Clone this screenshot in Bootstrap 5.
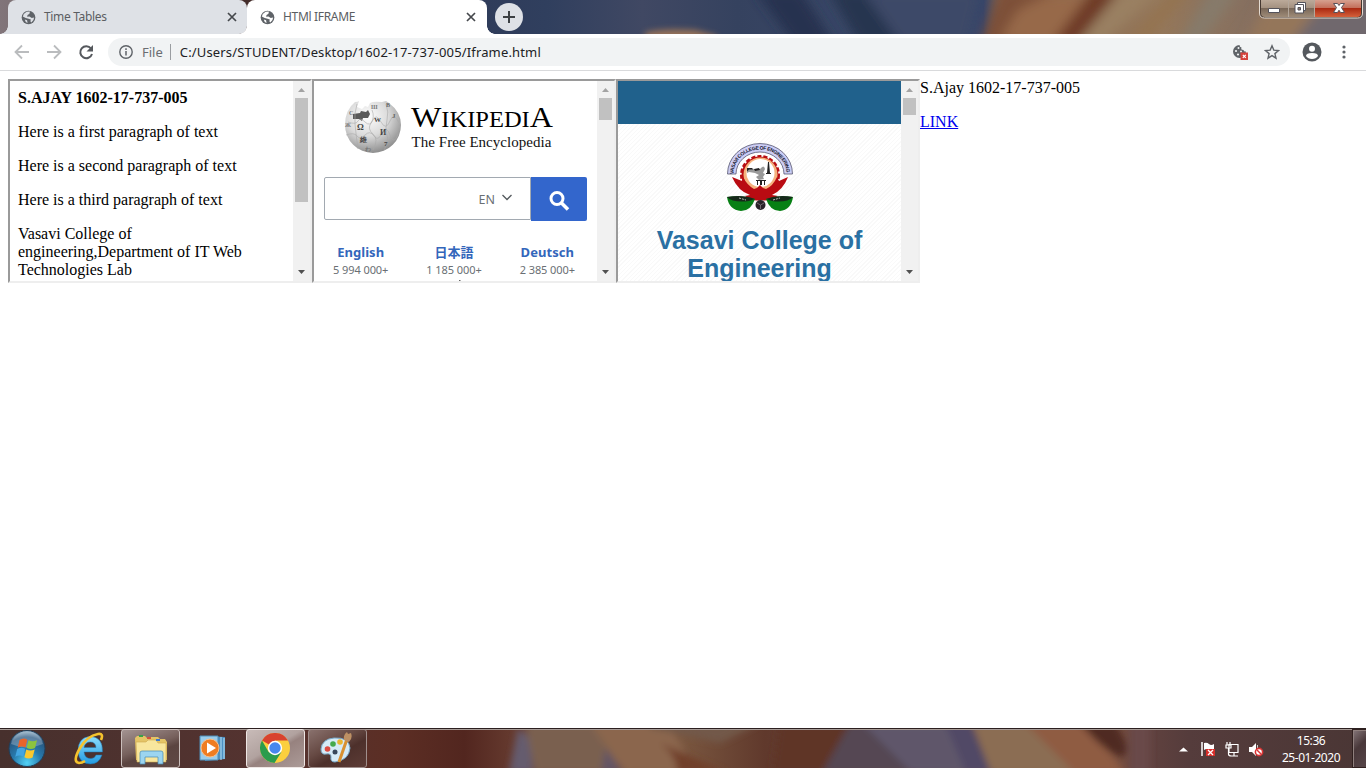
<!DOCTYPE html>
<html lang="en">
<head>
<meta charset="utf-8">
<title>HTML IFRAME</title>
<link href="https://cdn.jsdelivr.net/npm/bootstrap@5.3.0/dist/css/bootstrap.min.css" rel="stylesheet">
<style>
html,body{height:768px;overflow:hidden}
body{width:1366px;background:#fff;font-family:"Noto Sans","Noto Sans CJK JP",sans-serif;font-size:12px;line-height:16px;color:#000}
svg{display:block;flex:none}
.strip{height:34px;background:#36435f}
.wall{left:0;top:0;z-index:0}
.tab{height:34px;font-size:12px;color:#5b5e62;padding:0 10px 0 13px}
.tab svg.gl{margin-right:8px}
.tab-a{width:239px;margin-left:8px;background:#dee1e6;border-radius:8px 8px 8px 0;letter-spacing:-.33px}
.tab-b{width:240px;background:#fff;border-radius:8px 8px 0 0;letter-spacing:-.32px;padding-right:11px}
.tab-a::before,.tab-b::after{content:"";position:absolute;bottom:0;width:8px;height:8px}
.tab-a::before{left:-8px;background:radial-gradient(circle at 0 0,transparent 7.5px,#dee1e6 8px)}
.tab-b::before{content:"";position:absolute;bottom:0;left:-8px;width:8px;height:8px;background:radial-gradient(circle at 0 0,transparent 7.5px,#fff 8px)}
.tab-b::after{right:-8px;background:radial-gradient(circle at 100% 0,transparent 7.5px,#fff 8px)}
.plus{width:28px;height:28px;margin-left:8px;background:#dee1e6}
.caps{width:104px;height:19px;margin-right:3px}
.tools{height:37px;border-bottom:1px solid #d9dadc;padding:0 13px 0 13px}
.omni{height:28px;width:1182px;margin-left:13px;background:#f1f3f4;border-radius:14px;font-size:13px;color:#6a6d71;padding:0 10px 0 11px}
.omni .sep{width:1px;height:16px;background:#9a9da1;margin:0 9px 0 7px}
.url{color:#202124;letter-spacing:.155px}
.pg{height:657px;padding:8px}
.ser{font-family:"Liberation Serif",serif;font-size:16px;line-height:18px}
.ser p{margin:0 0 16px}
.fr{width:304px;height:204px;border:2px solid;border-color:#9a9a9a #eee #eee #9a9a9a;flex:none}
.fr .inner{width:283px;height:200px;overflow:hidden}
.sb{width:17px;height:200px;background:#f1f1f1}
.inp{width:207px;height:43px;border:1px solid #a2a9b1;border-radius:2px 0 0 2px;color:#6a6f74;padding-right:17px;font-size:12.500px}
.go{width:56px;height:44px;background:#36c;border-radius:0 2px 2px 0}
.langs{width:280px;padding-top:22px}
.langs b{display:block;color:#3366bb;font-size:13px;line-height:18px;letter-spacing:.05px}
.langs span{display:block;color:#6a6f74;font-size:11px;line-height:17px;letter-spacing:-.08px}
.vh{height:43px;background:#20618c}
.vb{height:157px;padding-top:19px;background:repeating-linear-gradient(135deg,#fff 0 2px,#f9f9f9 2px 3px)}
.vb h1{font:bold 25px/28px "Liberation Sans",sans-serif;color:#2a70a3;margin:14px 0 0}
.lk{color:#0000ee;text-decoration:underline}
.bar{height:40px;background:#4a302c}
.row-z{z-index:1}
.tb{width:59px;height:39px;margin-top:1px;border:1px solid #cbbfbc;border-radius:3px;background:linear-gradient(160deg,#a39391 0,#76605c 45%,#5b4440 60%,#5f4844 100%)}
.tb.dim{border-color:#a08f8c;background:linear-gradient(150deg,#89716d 0,#664943 40%,#4d302b 60%,#5d3c36)}
.tb.on{border-color:#eee6e4;background:linear-gradient(150deg,#c8bbb8 0,#b1a29f 45%,#97827f 55%,#ac9b98)}
.clock{color:#fff;font-size:12px;line-height:17px;width:72px;letter-spacing:-.45px}
.desk{width:14px;height:39px;border:1px solid #30201f;border-right:0;box-shadow:inset 1px 1px 0 #8f7f7d;background:linear-gradient(135deg,#86777a,#49383a 45%,#564548)}
</style>
</head>
<body class="d-flex flex-column">
<header class="strip d-flex position-relative overflow-hidden flex-shrink-0">
  <svg class="wall position-absolute" width="1366" height="34" viewBox="0 0 1366 34">
    <defs><filter id="b" x="-10%" y="-50%" width="120%" height="200%"><feGaussianBlur stdDeviation="6"/></filter><filter id="b2" x="-20%" y="-100%" width="140%" height="300%"><feGaussianBlur stdDeviation="3"/></filter>
    <linearGradient id="w"><stop offset="0" stop-color="#81757a"/><stop offset=".1" stop-color="#66544f"/><stop offset=".17" stop-color="#442a28"/><stop offset=".25" stop-color="#39342f"/><stop offset=".355" stop-color="#2f3c5a"/><stop offset=".4" stop-color="#303f5e"/><stop offset=".47" stop-color="#404863"/><stop offset=".54" stop-color="#35425f"/><stop offset=".66" stop-color="#3b4969"/><stop offset=".72" stop-color="#344469"/><stop offset=".735" stop-color="#86664f"/><stop offset=".85" stop-color="#94775a"/><stop offset="1" stop-color="#736567"/></linearGradient></defs>
    <rect width="1366" height="34" fill="url(#w)"/>
    <g filter="url(#b)">
      <path d="M755-10h45l35 55h-40z" fill="#27334f"/><path d="M828-10h34l40 55h-42z" fill="#283450"/><path d="M862-10h120l-14 55h-66z" fill="#3d4a67"/>
      <path d="M1000-10h52l-24 60h-50z" fill="#7d5038"/><path d="M1000 40l18-30 30-15h60l-34 50z" fill="#97694a"/>
      <path d="M1092-10h28l-45 55h-24z" fill="#6e3a28"/><path d="M1122-10h40l-60 55h-25z" fill="#9a8062"/><path d="M1176-10h15l-50 55h-16z" fill="#94734f"/><path d="M1210-10h30l-40 55h-22z" fill="#867a6a"/><path d="M1270-10h65l-40 55h-50z" fill="#94765a"/><path d="M1325 0h60v45h-95z" fill="#6f686d"/>
    </g>
    <path d="M645 33q12-5 50-3l22 6v6h-72z" fill="#9a7358" filter="url(#b2)"/>
  </svg>
  <div class="tab tab-a d-flex align-items-center position-relative"><svg class="gl" width="15" height="15" viewBox="0 0 16 16"><circle cx="8" cy="8" r="7.3" fill="#5f6368"/><path d="M6 1.8 9.5 1.6 9 4 7 5.200l-.5 2L9 7l2.500 1.500 2.500-.5q0 3-3 5.200L10 12l.5-2L8 9.200 5 8.500 2 7Q2.500 3.500 6 1.800M4 10l2.500 1 .5 2.800Q4.500 13 4 10" fill="#dee1e6"/></svg><span>Time Tables</span><svg class="ms-auto" width="10" height="10" viewBox="0 0 10 10"><path d="M1 1l8 8M9 1 1 9" stroke="#45484c" stroke-width="1.700"/></svg></div>
  <div class="tab tab-b d-flex align-items-center position-relative"><svg class="gl" width="15" height="15" viewBox="0 0 16 16"><circle cx="8" cy="8" r="7.3" fill="#5f6368"/><path d="M6 1.8 9.5 1.6 9 4 7 5.200l-.5 2L9 7l2.500 1.500 2.500-.5q0 3-3 5.200L10 12l.5-2L8 9.200 5 8.500 2 7Q2.500 3.500 6 1.800M4 10l2.500 1 .5 2.800Q4.500 13 4 10" fill="#fff"/></svg><span>HTMl IFRAME</span><svg class="ms-auto" width="10" height="10" viewBox="0 0 10 10"><path d="M1 1l8 8M9 1 1 9" stroke="#45484c" stroke-width="1.700"/></svg></div>
  <div class="plus rounded-circle d-flex align-items-center justify-content-center align-self-center row-z"><svg width="12" height="12" viewBox="0 0 12 12"><path d="M6 0v12M0 6h12" stroke="#3c4043" stroke-width="2"/></svg></div>
  <svg class="caps ms-auto row-z" viewBox="0 0 104 19">
    <defs><linearGradient id="cr" x2="0" y2="1"><stop stop-color="#d6a08f"/><stop offset=".45" stop-color="#c4705c"/><stop offset=".5" stop-color="#ab2a12"/><stop offset="1" stop-color="#d4613b"/></linearGradient><linearGradient id="cg" x2="0" y2="1"><stop stop-color="#bcaa9a"/><stop offset=".48" stop-color="#a3907f"/><stop offset=".5" stop-color="#7a6859"/><stop offset="1" stop-color="#9e8b77"/></linearGradient></defs>
    <path d="M.5-1v14q0 5 5 5h93q5 0 5-5V-1" fill="#453831" stroke="#e4dbd2"/><path d="M2 0h27v17H6q-4 0-4-4z" fill="url(#cg)"/><path d="M30 0h25v17H30z" fill="url(#cg)"/><path d="M56 0h46v13q0 4-4 4H56z" fill="url(#cr)"/>
    <path d="M29.500 0v17M55.500 0v17" stroke="#e4d7ca" stroke-width=".7"/>
    <path d="M9.500 8.500h11v4h-11z" fill="#fff" stroke="#54535b"/>
    <path d="M38.500 2.500h8v8h-8z" fill="#fff" stroke="#54535b"/><path d="M36 4.500h8.500V13H36z" fill="#fff" stroke="#54535b"/><path d="M39 7.500h2.500V10H39z" fill="#8b7b6e" stroke="#54535b"/>
    <path d="M74.500 3.500h4l1.500 2 1.500-2h4l-3 4 3 5h-4l-1.500-2.300-1.500 2.300h-4l3-5z" fill="#fff" stroke="#595058"/>
  </svg>
</header>
<nav class="tools d-flex align-items-center flex-shrink-0">
  <svg width="82" height="20" viewBox="0 0 82 20"><g fill="none" stroke="#babcbe" stroke-width="1.800"><path d="M16 10H3M9 3.500 2.500 10 9 16.500M34 10h13M41 3.500l6.500 6.500-6.500 6.500"/></g><path d="M78 6.500A6 6 0 1 0 79 12" fill="none" stroke="#55585d" stroke-width="2"/><path d="M80 3v6.500h-6.500z" fill="#55585d"/></svg>
  <div class="omni d-flex align-items-center">
    <svg width="14" height="14" viewBox="0 0 14 14"><circle cx="7" cy="7" r="6.200" fill="none" stroke="#5f6368" stroke-width="1.400"/><path d="M7 6v4.500M7 3.300v1.600" stroke="#5f6368" stroke-width="1.500"/></svg>
    <span style="margin-left:9px">File</span><i class="sep"></i><span class="url">C:/Users/STUDENT/Desktop/1602-17-737-005/Iframe.html</span>
    <svg class="ms-auto" width="17" height="17" viewBox="0 0 17 17" style="margin-right:15px"><path d="M7.500 1a6.500 6.500 0 1 0 6.500 6.500q-2 .5-2.500-1.500-3 0-2-2.500-2-.5-2-2.500" fill="#5f6368"/><g fill="#f1f3f4"><circle cx="4" cy="7" r="1.100"/><circle cx="6.500" cy="4" r="1"/><circle cx="6" cy="10.500" r="1.100"/><circle cx="9" cy="7.500" r="1"/></g><path d="M8.500 8.500H16V16H8.500z" fill="#d5433c"/><path d="M10.800 10.800l3 3m0-3-3 3" stroke="#fff" stroke-width="1.200"/></svg>
    <svg width="16" height="16" viewBox="0 0 16 16"><path d="M8 1.800l1.800 4.300 4.700.4-3.600 3.100 1.100 4.600L8 11.700l-4 2.500 1.100-4.600L1.500 6.500l4.700-.4z" fill="none" stroke="#5f6368" stroke-width="1.400"/></svg>
  </div>
  <svg width="20" height="20" viewBox="0 0 20 20" style="margin-left:12px"><circle cx="10" cy="10" r="9.500" fill="#55595e"/><circle cx="10" cy="6.800" r="3" fill="#fff"/><path d="M4 14q0-3 6-3t6 3q-2 3-6 3t-6-3" fill="#fff"/></svg>
  <svg width="4" height="16" viewBox="0 0 4 16" class="ms-auto" style="margin-right:7px" fill="#5f6368"><circle cx="2" cy="3" r="1.600"/><circle cx="2" cy="8" r="1.600"/><circle cx="2" cy="13" r="1.600"/></svg>
</nav>
<main class="pg d-flex flex-shrink-0">
  <section class="fr d-flex">
    <div class="inner ser p-2"><p><b>S.AJAY 1602-17-737-005</b></p><p>Here is a first paragraph of text</p><p>Here is a second paragraph of text</p><p>Here is a third paragraph of text</p><p class="mb-0">Vasavi College of engineering,Department of IT Web Technologies Lab</p></div>
    <svg class="sb" viewBox="0 0 17 200"><path d="M5 11l3.500-4 3.500 4z" fill="#a3a3a3"/><path d="M2 17h13v104H2z" fill="#c1c1c1"/><path d="M5 189h7l-3.500 4z" fill="#505050"/></svg>
  </section>
  <section class="fr d-flex">
    <div class="inner">
      <svg width="283" height="96" viewBox="314 81 283 96">
        <defs><radialGradient id="gg" cx=".4" cy=".3" r=".75"><stop stop-color="#fff"/><stop offset=".5" stop-color="#dadada"/><stop offset="1" stop-color="#858585"/></radialGradient></defs>
        <path d="M355 102q3 0 4-1l-2 6 5 2 3-3 3 1 2-4q3-2 12-1l4-1 3 2q12 9 12 22a28 28 0 0 1-56 0q0-15 10-23" fill="url(#gg)"/>
        <path d="M353 114l7-1 1-2 5 1 2-2 2 4-2 4-5 0-1 3-3-2-6 0z" fill="#5a5a5a"/>
        <path d="M348 122q8 3 10-1t7 1 8-2 8 2 9-1 9 2M346 135q8-3 11 1t8-1 9 1 8-3 8 2 8-1M357 104q-3 9-2 20t3 25M372 110q3 7-1 13t2 11 0 16M386 104q3 8 1 16t0 15-3 15" fill="none" stroke="#aaa" stroke-width=".6"/>
        <g font-family="Liberation Serif,serif" font-weight="bold" fill="#444"><text x="357" y="130" font-size="8.500">Ω</text><text x="374" y="122" font-size="7">W</text><text x="380" y="135" font-size="8">И</text><text x="360" y="142" font-size="7">維</text><text x="392" y="118" font-size="7" fill="#666">J</text><text x="345" y="127" font-size="6" fill="#777">Ж</text><text x="371" y="109" font-size="6" fill="#777">Ш</text><text x="384" y="146" font-size="7">7</text><text x="365" y="151" font-size="6" fill="#777">わ</text><text x="349" y="115" font-size="6" fill="#777">C</text><text x="386" y="107" font-size="6" fill="#666">B</text></g>
        <text x="411" y="127" font-size="29.500" font-family="Liberation Serif,serif" textLength="142" lengthAdjust="spacingAndGlyphs">W<tspan font-size="22.500">IKIPEDI</tspan>A</text>
        <text x="411.500" y="147" font-size="15" font-family="Liberation Serif,serif" fill="#111" textLength="140" lengthAdjust="spacing">The Free Encyclopedia</text>
      </svg>
      <div class="d-flex" style="padding-left:10px"><div class="inp d-flex align-items-center justify-content-end"><span style="margin-top:2px">EN</span><svg width="12" height="12" viewBox="0 0 12 12" style="margin:-4px 0 0 6px"><path d="M1.500 4 6 8.500 10.500 4" fill="none" stroke="#54595d" stroke-width="1.300"/></svg></div><div class="go d-flex align-items-center justify-content-center"><svg width="22" height="22" viewBox="0 0 22 22" style="margin-top:4px"><circle cx="9" cy="8.500" r="6" fill="none" stroke="#fff" stroke-width="3"/><path d="M13 12.500l7 7" stroke="#fff" stroke-width="3.500"/></svg></div></div>
      <div class="langs d-flex text-center"><div class="col-4"><b>English</b><span>5 994 000+</span></div><div class="col-4"><b>日本語</b><span>1 185 000+</span></div><div class="col-4"><b>Deutsch</b><span>2 385 000+</span></div></div>
      <svg width="283" height="3" viewBox="0 0 283 3"><path d="M145 2h1.500v1H145z" fill="#666"/></svg>
    </div>
    <svg class="sb" viewBox="0 0 17 200"><path d="M5 11l3.500-4 3.500 4z" fill="#a3a3a3"/><path d="M2 17h13v22H2z" fill="#c1c1c1"/><path d="M5 189h7l-3.500 4z" fill="#505050"/></svg>
  </section>
  <section class="fr d-flex">
    <div class="inner"><div class="vh"></div><div class="vb text-center">
      <svg class="mx-auto" width="68" height="69" viewBox="0 0 68 69">
        <path d="M1.500 31A32 30 0 0 1 66.500 31H58A24 22 0 0 0 10 31z" fill="#cccdf5" stroke="#55566f" stroke-width=".8"/>
        <path id="ar" d="M7.500 31A26.500 24.500 0 0 1 60.500 31" fill="none"/><text font-family="Liberation Sans,sans-serif" font-weight="bold" font-size="5" fill="#15152e"><textPath href="#ar" textLength="78">VASAVI COLLEGE OF ENGINEERING</textPath></text>
        <circle cx="34" cy="32" r="18.500" fill="#b80d12" stroke="#b80d12" stroke-width="3" stroke-dasharray="4 2"/>
        <circle cx="34.500" cy="31.500" r="17" fill="#f5b27e"/><circle cx="34.500" cy="30" r="14" fill="#fff"/>
        <path d="M21 25h4l3 1h6q4-5 5 0l-2 4 2 1-2 3 1 2-5 1-3-3 3-2-4-2-6-1-2 1z" fill="#999"/><path d="M21 25h5l1 1.500h-4l-2 2zM28 26l5-1 1 2-5 1zM41 30l1-11h1l1 11h1v1h-5v-1zM30 37h10v1H30zM31 38h1v4h-1zM34 38h2v4h-2zM38 38h1v4h-1z" fill="#222"/>
        <path d="M6 34l10 4 1-4q4 8 11 12l3-1 3-3 3 3 3 1q7-3 11-12l2 4 9-4q-5 13-16 18l6 1q-10 6-17 4-8 2-16-4l5-1Q12 48 6 34" fill="#b90b12"/>
        <path d="M1 54q16-2 28 2-4 12-14 12Q3 67 1 54M67 54q-15-2-27 2 4 12 14 12 11-1 13-14" fill="#078014"/><path d="M1 54q16-3 28 2l-6 2Q7 60 1 54M67 54q-15-3-27 2l6 2q15 2 21-4" fill="#16291a"/><path d="M13 55l7 2m27 0 7-2" stroke="#bbb" stroke-dasharray="2 1"/><circle cx="34.500" cy="62" r="5" fill="#282228"/><path d="M31 60l3.500 2 3.500-2m-3.500 2v4" fill="none" stroke="#8c858c" stroke-width=".7"/>
      </svg>
      <h1>Vasavi College of Engineering</h1></div></div>
    <svg class="sb" viewBox="0 0 17 200"><path d="M5 11l3.500-4 3.500 4z" fill="#a3a3a3"/><path d="M2 17h13v17H2z" fill="#c1c1c1"/><path d="M5 189h7l-3.500 4z" fill="#505050"/></svg>
  </section>
  <section class="ser"><p>S.Ajay 1602-17-737-005</p><p><a class="lk" href="#">LINK</a></p></section>
</main>
<footer class="bar d-flex position-relative overflow-hidden flex-shrink-0">
  <svg class="wall position-absolute" width="1366" height="40" viewBox="0 0 1366 40">
    <defs><linearGradient id="v"><stop stop-color="#47302d"/><stop offset=".2" stop-color="#553330"/><stop offset=".29" stop-color="#5c2e24"/><stop offset=".34" stop-color="#52261f"/><stop offset=".38" stop-color="#683d31"/><stop offset=".5" stop-color="#79563f"/><stop offset=".56" stop-color="#60392c"/><stop offset=".62" stop-color="#643f38"/><stop offset=".8" stop-color="#885840"/><stop offset=".84" stop-color="#61423f"/><stop offset=".87" stop-color="#553c3c"/><stop offset="1" stop-color="#4a3635"/></linearGradient><filter id="c" x="-10%" y="-50%" width="120%" height="200%"><feGaussianBlur stdDeviation="3.500"/></filter></defs>
    <rect width="1366" height="40" fill="url(#v)"/>
    <g filter="url(#c)"><path d="M518 0l12 10 3 35h-24z" fill="#655b6e"/><path d="M525-5h80l15 50h-85z" fill="#7a6050"/><path d="M605 20l18 25h-22z" fill="#635465"/><path d="M590-5h75q20 20 25 50h-65z" fill="#8b664d"/><path d="M650-5h110l-40 20q-45-10-70-15" fill="#725948"/><path d="M660 15q15 10 18 30h50z" fill="#713f2b"/><path d="M780-5h70l-28 50h-50z" fill="#5e3425"/><path d="M850-5h40l40 50H822z" fill="#554653"/><path d="M862-5h95l25 50h-70z" fill="#5f566a"/><path d="M945-5h26l20 50h-25z" fill="#514966"/><path d="M972-5h70l50 50H991z" fill="#8b6d52"/><path d="M1025-5h60l40 50h-50z" fill="#8f5c42"/><path d="M1080-5h35q20 30 6 34-18-6-41-34" fill="#4f2a24"/><path d="M1130-5h20v50h-20z" fill="#694a49"/></g>
    <path d="M0 .5h1366" stroke="#2c2020"/><path d="M0 1.500h1366" stroke="#a79b96"/>
  </svg>
  <svg class="row-z" width="121" height="40" viewBox="0 0 121 40">
    <defs><radialGradient id="o" cx=".5" cy=".9" r=".9"><stop stop-color="#52d2f5"/><stop offset=".45" stop-color="#2779ac"/><stop offset=".8" stop-color="#285780"/><stop offset="1" stop-color="#9bb8cc"/></radialGradient><linearGradient id="ie" x2="0" y2="1"><stop stop-color="#8ddcfb"/><stop offset="1" stop-color="#239be1"/></linearGradient></defs>
    <circle cx="27" cy="20.500" r="18" fill="url(#o)" stroke="#223e58"/><path d="M11 16a16.500 16.500 0 0 1 32 0q-16 7-32 0" fill="#fff" opacity=".25"/>
    <path d="M19.500 12q4-3 7.800-.3L25.500 19.500q-4-2-7.800.3z" fill="#e8642b"/><path d="M28.500 12.300q4 2 8.500 0L35 20q-4 2-8.300 0z" fill="#8cc43e"/><path d="M17.200 21q4-2.500 8-.3L23.300 28.500q-4-2-8 .3z" fill="#43a5e1"/><path d="M26.300 21.400q4 2 8.400 0L32.600 29.500q-4 2-8.200-.3z" fill="#fbc82e"/>
    <path d="M102.500 24H84q1 7 7 6.500 3.500 0 5-3.500h6q-3 9-11.500 9Q79 36 78 23 78 9 90.500 8.500 103 9 102.500 24M84 19.500h12q-.5-5.500-5.700-5.500T84 19.500" fill="url(#ie)" stroke="#1d75ae" stroke-width=".5"/><path d="M101 12q3-7-3-6-11 2-18 14-8 14-1 15 3 0 6-2" fill="none" stroke="#f5c22d" stroke-width="2.600"/>
  </svg>
  <div class="tb row-z d-flex align-items-center justify-content-center"><svg width="34" height="32" viewBox="0 0 34 32"><path d="M1 5l2-2h8l2 2h3l1-1h7l2 2h5l2 3v18H2z" fill="#e4c466"/><path d="M2 9h10l2-2h8l2 3h8v19H3z" fill="#f8e69d" stroke="#cda84f" stroke-width=".6"/><path d="M5 3h4" stroke="#39a24a" stroke-width="2"/><path d="M13 5h4" stroke="#d4523f" stroke-width="2"/><path d="M22 7h4" stroke="#3c79cc" stroke-width="2"/><path d="M6 20q0-2 2-2h19q2 0 2 2v11h-5v-7H11v7H6z" fill="#9cd5f0" stroke="#458bb5" stroke-width=".7"/></svg></div>
  <div class="row-z d-flex align-items-center justify-content-center" style="width:66px"><svg width="28" height="28" viewBox="0 0 28 28"><path d="M6 2l20 1v22L6 27z" fill="#4d8fc1"/><path d="M22 3v23M25 4v21" stroke="#b7e2f7"/><path d="M1 2h18v24H1z" fill="#9acceb" stroke="#4e8fb9"/><circle cx="11" cy="14" r="9" fill="#ef7d22" stroke="#f8c08c"/><path d="M8 8.500v11l9-5.500z" fill="#fff"/></svg></div>
  <div class="tb on row-z d-flex align-items-center justify-content-center"><svg width="30" height="30" viewBox="0 0 30 30" style="margin:-1px 2px 0 0"><circle cx="15" cy="15" r="15" fill="#fbcf3e"/><path d="M15 15 2 7.500A15 15 0 0 1 28 7.500H15z" fill="#d8422f"/><path d="M2 7.500A15 15 0 0 0 14.500 30L21.500 18.800 15 22 8.500 18.800z" fill="#2b9c4d"/><circle cx="15" cy="15" r="7.200" fill="#fff"/><circle cx="15" cy="15" r="5.700" fill="#4687ee"/></svg></div>
  <div class="tb dim row-z d-flex align-items-center justify-content-center" style="margin-left:3px"><svg width="32" height="32" viewBox="0 0 32 32" style="margin:-2px 3px 0 0"><path d="M1 17Q2 7 14 6q15-1 16 10-1 12-15 14-5 0-4-5 0-4-5-3-5 1-5-5" fill="#d6ebf7" stroke="#77a9c8"/><circle cx="7.500" cy="17" r="2.800" fill="#dc4b42"/><circle cx="13" cy="12" r="2.800" fill="#45a94c"/><circle cx="20" cy="10" r="2.800" fill="#eab530"/><circle cx="15" cy="20" r="2.500" fill="#37475a"/><path d="M27 7 19 30" stroke="#d99131" stroke-width="3"/><path d="M24 8q-1-5 3-8l1 2 3-1q2 5-2 9z" fill="#bd9064"/></svg></div>
  <svg class="ms-auto row-z" width="94" height="40" viewBox="1175 728 94 40"><path d="M1179 751.500l4.500-4 4.500 4z" fill="#fff"/>
    <path d="M1202 742v14" stroke="#fff" stroke-width="1.500"/><path d="M1204 743q3-1 5 1t5 0v7q-3 1-5-1t-5 0z" fill="#fff"/><path d="M1206 749h9v7h-9z" fill="#d72e2a"/><path d="M1208 750l5 5m0-5-5 5" stroke="#fff" stroke-width="1.300"/>
    <path d="M1229 744.500h9v8h-9zM1234 753v3M1231 756h7M1227 742v3M1230 742v3M1226 745h5v3h-5zM1228.500 748v6q0 2 3 2" fill="none" stroke="#fff" stroke-width="1.200"/>
    <path d="M1249 747h3l4-4v13l-4-4h-3z" fill="#fff"/><path d="M1257.500 745v9" stroke="#ccc"/><circle cx="1259" cy="752" r="3.600" fill="#fff" stroke="#db3434" stroke-width="1.600"/><path d="M1257 750l4 4" stroke="#db3434" stroke-width="1.400"/>
  </svg>
  <div class="clock row-z text-center" style="margin-left:6px;padding-top:4px">15:36<br>25-01-2020</div>
  <div class="desk row-z" style="margin:1px 0 0 5px"></div>
</footer>
<script src="https://cdn.jsdelivr.net/npm/bootstrap@5.3.0/dist/js/bootstrap.bundle.min.js"></script>
</body>
</html>
